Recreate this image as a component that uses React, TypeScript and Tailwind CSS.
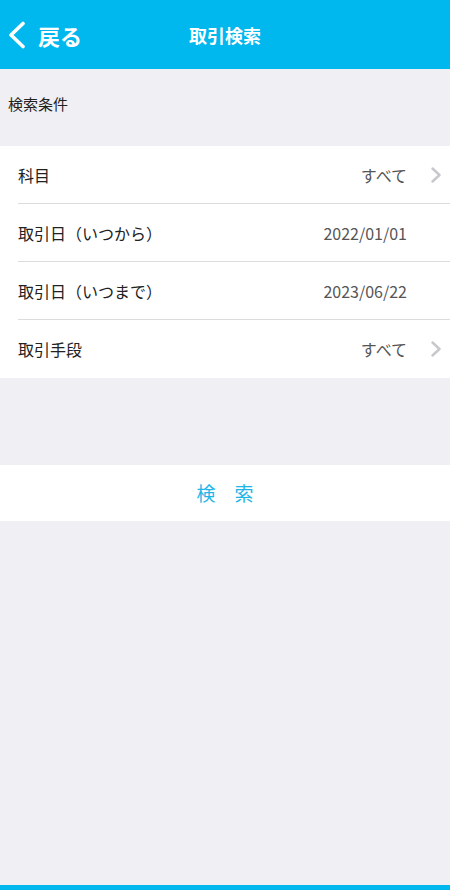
const font = "font-['Noto_Sans_CJK_JP','Noto_Sans',sans-serif]";

const rows = [
  { label: "科目", value: "すべて", arrow: true },
  { label: "取引日（いつから）", value: "2022/01/01", arrow: false },
  { label: "取引日（いつまで）", value: "2023/06/22", arrow: false },
  { label: "取引手段", value: "すべて", arrow: true },
];

function Chevron() {
  return (
    <svg width="12" height="16" viewBox="0 0 12 16" className="text-[#c7c7cc]">
      <path
        d="M2.5 1.5 L9.5 8 L2.5 14.5"
        fill="none"
        stroke="currentColor"
        strokeWidth="2.4"
        strokeLinecap="round"
        strokeLinejoin="round"
      />
    </svg>
  );
}

export default function App() {
  return (
    <div className={`flex h-[890px] w-[450px] flex-col bg-[#efeff4] ${font}`}>
      <header className="relative flex h-[69px] shrink-0 items-center bg-[#00b8ee] text-white">
        <button className="flex items-center gap-[11px] pl-[7px]">
          <svg width="20" height="28" viewBox="0 0 20 28">
            <path
              d="M16 2.5 L4 14 L16 25.5"
              fill="none"
              stroke="white"
              strokeWidth="3.6"
              strokeLinecap="round"
              strokeLinejoin="round"
            />
          </svg>
          <span className="text-[22px] font-bold leading-none">戻る</span>
        </button>
        <h1 className="absolute left-1/2 -translate-x-1/2 text-[18px] font-bold leading-none">
          取引検索
        </h1>
      </header>

      <div className="px-[8px] pt-[25px] pb-[32px] text-[15px] leading-[20px] text-[#222]">
        検索条件
      </div>

      <ul className="bg-white">
        {rows.map((r, i) => (
          <li key={r.label} className="pl-[18px]">
            <div
              className={`flex h-[58px] items-center justify-between pr-[8px] ${
                i < rows.length - 1 ? "border-b border-[#dcdcdc]" : ""
              }`}
            >
              <span className="text-[16px] text-[#222]">{r.label}</span>
              <span className="flex items-center">
                <span className="text-[16px] text-[#555]">{r.value}</span>
                <span className="ml-[23px] flex w-[12px] justify-center">
                  {r.arrow ? <Chevron /> : null}
                </span>
              </span>
            </div>
          </li>
        ))}
      </ul>

      <div className="mt-[87px] flex h-[56px] items-center justify-center bg-white">
        <span className="pl-[19px] text-[19px] tracking-[19px] text-[#1fb5e8]">
          検索
        </span>
      </div>

      <div className="flex-1" />
      <div className="h-[5px] shrink-0 bg-[#00b8ee]" />
    </div>
  );
}
